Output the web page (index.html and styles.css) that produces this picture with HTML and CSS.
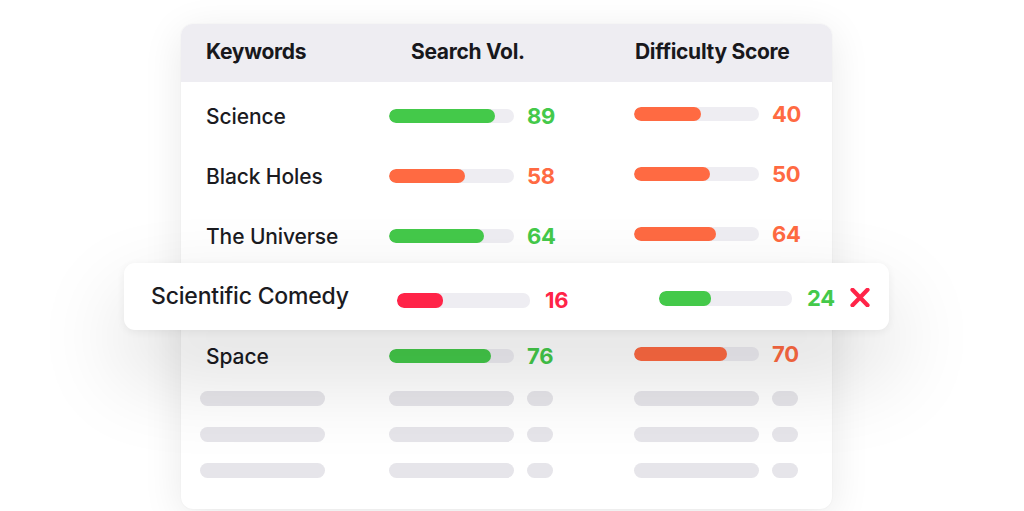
FILE: index.html
```html
<!DOCTYPE html>
<html>
<head>
<meta charset="utf-8">
<link rel="stylesheet" href="styles.css">
</head>
<body>
<div class="stage">
  <div class="card">
    <div class="head">
      <div class="hk">Keywords</div>
      <div class="hs">Search Vol.</div>
      <div class="hd">Difficulty Score</div>
    </div>
    <div class="rows">
      <div class="row">
        <div class="kw">Science</div>
        <div class="metric"><div class="track"><div class="fill green" style="width:106px"></div></div><span class="num t-green">89</span></div>
        <div class="metric diff"><div class="track"><div class="fill orange" style="width:67px"></div></div><span class="num t-orange">40</span></div>
      </div>
      <div class="row">
        <div class="kw">Black Holes</div>
        <div class="metric"><div class="track"><div class="fill orange" style="width:76px"></div></div><span class="num t-orange">58</span></div>
        <div class="metric diff"><div class="track"><div class="fill orange" style="width:76px"></div></div><span class="num t-orange">50</span></div>
      </div>
      <div class="row">
        <div class="kw">The Universe</div>
        <div class="metric"><div class="track"><div class="fill green" style="width:95px"></div></div><span class="num t-green">64</span></div>
        <div class="metric diff"><div class="track"><div class="fill orange" style="width:82px"></div></div><span class="num t-orange">64</span></div>
      </div>
      <div class="row hl">
        <div class="kw kw-hl">Scientific Comedy</div>
        <div class="metric m-hl1"><div class="track track-hl"><div class="fill red" style="width:46px"></div></div><span class="num t-red">16</span></div>
        <div class="metric m-hl2"><div class="track track-hl"><div class="fill green" style="width:52px"></div></div><span class="num t-green">24</span>
          <svg class="xicon" width="20" height="19" viewBox="0 0 20 19"><path d="M2.5 1.8 L17.5 17.2 M17.5 1.8 L2.5 17.2" stroke="#ff2448" stroke-width="4.2" stroke-linecap="round" fill="none"/></svg>
        </div>
      </div>
      <div class="row">
        <div class="kw">Space</div>
        <div class="metric"><div class="track"><div class="fill green" style="width:102px"></div></div><span class="num t-green">76</span></div>
        <div class="metric diff"><div class="track"><div class="fill orange" style="width:93px"></div></div><span class="num t-orange">70</span></div>
      </div>
    </div>
    <div class="ghosts">
      <div class="ghost"><span class="g g-long g-kw"></span><span class="g g-long"></span><span class="g g-short"></span><span class="g g-long g-d"></span><span class="g g-short"></span></div>
      <div class="ghost"><span class="g g-long g-kw"></span><span class="g g-long"></span><span class="g g-short"></span><span class="g g-long g-d"></span><span class="g g-short"></span></div>
      <div class="ghost"><span class="g g-long g-kw"></span><span class="g g-long"></span><span class="g g-short"></span><span class="g g-long g-d"></span><span class="g g-short"></span></div>
    </div>
  </div>
</div>
</body>
</html>
```
FILE: styles.css
```css
* { box-sizing: border-box; }
html, body { margin: 0; padding: 0; background: #ffffff; }
body {
  font-family: "Inter", "Lato", sans-serif;
  color: #1b1b1f;
  width: 1024px;
  height: 511px;
  overflow: hidden;
}
.stage {
  display: flex;
  padding-top: 24px;
  padding-left: 181px;
}
.card {
  width: 651px;
  height: 485px;
  background: #ffffff;
  border-radius: 12px;
  box-shadow: 0 8px 40px rgba(0, 0, 0, 0.09), 0 0 2px rgba(0, 0, 0, 0.06);
}
.head {
  height: 58px;
  padding-bottom: 4px;
  background: #eeedf2;
  border-radius: 12px 12px 0 0;
  display: grid;
  grid-template-columns: 208px 245px 1fr;
  align-items: center;
  font-weight: 700;
  font-size: 21px;
  letter-spacing: -0.3px;
  color: #18181c;
}
.hk { padding-left: 25px; }
.hs { padding-left: 22px; }
.hd { padding-left: 1px; }
.rows { padding-top: 4px; }
.row {
  height: 60px;
  display: grid;
  grid-template-columns: 208px 245px 1fr;
  align-items: center;
}
.kw {
  padding-left: 25px;
  font-size: 21px;
  font-weight: 500;
  letter-spacing: -0.1px;
  color: #1b1b1f;
}
.metric {
  display: flex;
  align-items: center;
  gap: 13px;
}
.diff { margin-top: -4px; }
.track {
  width: 125px;
  height: 14px;
  border-radius: 7px;
  background: #eeedf2;
  overflow: hidden;
}
.fill { height: 100%; border-radius: 7px; }
.green { background: #44c94a; }
.orange { background: #ff6a42; }
.red { background: #ff2448; }
.num {
  font-size: 22px;
  font-weight: 700;
  letter-spacing: -0.3px;
}
.t-green { color: #44c94a; }
.t-orange { color: #ff6a42; }
.t-red { color: #ff2448; }

.hl {
  position: relative;
  z-index: 2;
  height: 67px;
  margin: -3px -57px -4px -57px;
  background: #ffffff;
  border-radius: 11px;
  grid-template-columns: 273px 262px 1fr;
  box-shadow: 0 40px 90px rgba(0, 0, 0, 0.16), 0 2px 8px rgba(0, 0, 0, 0.06);
}
.kw-hl { padding-left: 27px; font-size: 23px; margin-top: -2px; letter-spacing: -0.2px; }
.track-hl { width: 133px; height: 15px; }
.m-hl1 { gap: 15px; margin-top: 7px; }
.m-hl2 { gap: 15px; margin-top: 3px; }
.xicon { margin-left: 0; margin-top: -1px; }

.ghosts { margin-top: -6px; }
.ghost {
  height: 36px;
  display: flex;
  align-items: center;
  padding-left: 19px;
}
.g {
  display: block;
  height: 15px;
  border-radius: 8px;
  background: #e6e5ea;
}
.g-long { width: 125px; }
.g-short { width: 26px; margin-left: 13px; }
.g-kw { margin-right: 64px; }
.g-d { margin-left: 81px; }
```
